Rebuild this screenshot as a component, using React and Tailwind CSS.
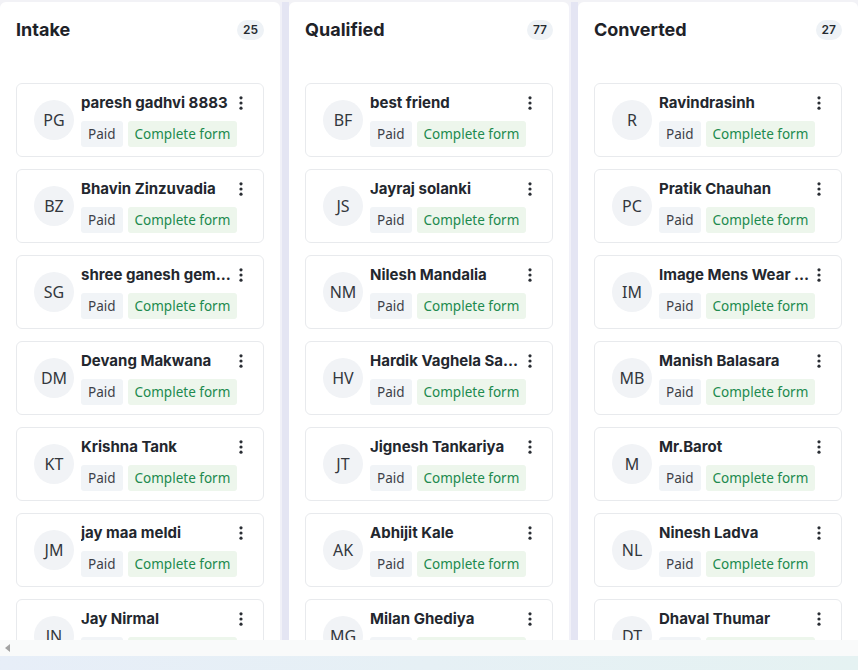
import React from "react";

const columns = [
  {
    title: "Intake",
    count: 25,
    items: [
      ["PG", "paresh gadhvi 8883"],
      ["BZ", "Bhavin Zinzuvadia"],
      ["SG", "shree ganesh gems & jewellers"],
      ["DM", "Devang Makwana"],
      ["KT", "Krishna Tank"],
      ["JM", "jay maa meldi"],
      ["JN", "Jay Nirmal"],
    ],
  },
  {
    title: "Qualified",
    count: 77,
    items: [
      ["BF", "best friend"],
      ["JS", "Jayraj solanki"],
      ["NM", "Nilesh Mandalia"],
      ["HV", "Hardik Vaghela Sales"],
      ["JT", "Jignesh Tankariya"],
      ["AK", "Abhijit Kale"],
      ["MG", "Milan Ghediya"],
    ],
  },
  {
    title: "Converted",
    count: 27,
    items: [
      ["R", "Ravindrasinh"],
      ["PC", "Pratik Chauhan"],
      ["IM", "Image Mens Wear Store"],
      ["MB", "Manish Balasara"],
      ["M", "Mr.Barot"],
      ["NL", "Ninesh Ladva"],
      ["DT", "Dhaval Thumar"],
    ],
  },
];

function Kebab() {
  return (
    <svg width="16" height="16" viewBox="0 0 16 16" className="text-[#2a2e34]">
      <circle cx="8" cy="2.8" r="1.6" fill="currentColor" />
      <circle cx="8" cy="8" r="1.6" fill="currentColor" />
      <circle cx="8" cy="13.2" r="1.6" fill="currentColor" />
    </svg>
  );
}

function Card({ initials, name }) {
  return (
    <div className="w-[248px] h-[74px] shrink-0 rounded-[6px] border border-[#e8eaed] bg-white flex items-center pl-[17px] pr-[14px]">
      <div className="w-[40px] h-[40px] shrink-0 rounded-full bg-[#f1f3f6] flex items-center justify-center text-[16px] text-[#33373d] font-['Noto_Sans',sans-serif]">
        {initials}
      </div>
      <div className="ml-[7px] flex-1 min-w-0 flex flex-col gap-[8px]">
        <div className="flex items-center h-[20px]">
          <div className="flex-1 min-w-0 truncate text-[15px] font-bold text-[#23272e] font-['Inter',sans-serif]">
            {name}
          </div>
          <div className="w-[16px] shrink-0 flex items-center justify-center">
            <Kebab />
          </div>
        </div>
        <div className="flex items-center gap-[5px] font-['Noto_Sans',sans-serif] text-[13.5px]">
          <span className="h-[26px] px-[7px] rounded-[3px] bg-[#f1f4f7] text-[#3d4148] flex items-center">Paid</span>
          <span className="h-[26px] px-[7px] rounded-[3px] bg-[#edf6ec] text-[#208a4e] flex items-center">Complete form</span>
        </div>
      </div>
    </div>
  );
}

function Column({ col }) {
  return (
    <div className="w-[280px] shrink-0 h-full bg-white rounded-t-[6px] flex flex-col overflow-hidden">
      <div className="flex items-center justify-between px-[16px] pt-[15px] h-[40px]">
        <span className="text-[18px] font-bold text-[#1e2228] font-['Inter',sans-serif]">{col.title}</span>
        <span className="h-[20px] min-w-[26px] px-[6px] rounded-full bg-[#eef2f6] text-[12px] font-semibold text-[#252a30] font-['Inter',sans-serif] flex items-center justify-center">
          {col.count}
        </span>
      </div>
      <div className="mt-[41px] px-[16px] flex flex-col gap-[12px]">
        {col.items.map(([i, n]) => (
          <Card key={n} initials={i} name={n} />
        ))}
      </div>
    </div>
  );
}

function Strip() {
  return (
    <div className="w-[9px] shrink-0 h-full flex">
      <div className="w-[2px] bg-[#f1f1f8]" />
      <div className="flex-1 bg-[#e4e5f3]" />
    </div>
  );
}

export default function App() {
  return (
    <div className="w-[858px] h-[670px] overflow-hidden bg-white flex flex-col">
      <div className="h-[640px] flex pt-[2px] bg-[#f2f2f6]">
        <Column col={columns[0]} />
        <Strip />
        <Column col={columns[1]} />
        <Strip />
        <Column col={columns[2]} />
      </div>
      <div className="h-[16px] bg-[#f9fafa] flex items-center pl-[5px]">
        <svg width="6" height="8" viewBox="0 0 6 8">
          <polygon points="5,0 5,8 0,4" fill="#a3a3a3" />
        </svg>
      </div>
      <div className="h-[14px] bg-gradient-to-r from-[#e7eef8] to-[#e5f2f2]" />
    </div>
  );
}
